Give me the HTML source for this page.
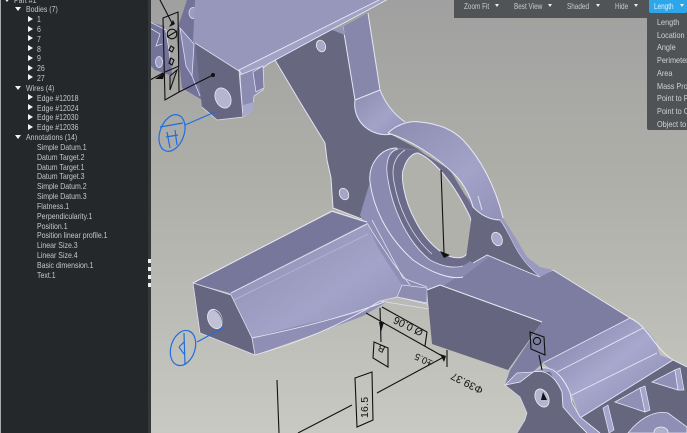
<!DOCTYPE html>
<html><head><meta charset="utf-8"><style>
html,body{margin:0;padding:0;width:687px;height:433px;overflow:hidden;background:#aaa}
#root{position:relative;width:687px;height:433px;overflow:hidden;font-family:"Liberation Sans",sans-serif}
svg{position:absolute;left:0;top:0;filter:blur(.35px)}
#side{position:absolute;left:1px;top:0;width:147px;height:433px;background:#24282b}
#strip{position:absolute;left:148px;top:0;width:3px;height:433px;background:#33383b}
.r{position:absolute;font-size:8.3px;line-height:10px;height:10px;color:#c4c8ca;white-space:nowrap;transform:scaleX(.84);transform-origin:0 0;filter:blur(.25px)}
.o{position:absolute;width:0;height:0;border-left:3.5px solid transparent;border-right:3.5px solid transparent;border-top:4.5px solid #f2f2f2}
.c{position:absolute;width:0;height:0;border-top:3.5px solid transparent;border-bottom:3.5px solid transparent;border-left:5px solid #f2f2f2}
#bar{position:absolute;left:454px;top:0;width:233px;height:18px;background:#505457}
.b{position:absolute;top:1px;font-size:8.2px;line-height:11px;color:#c8cacc;white-space:nowrap;transform:scaleX(.78);transform-origin:0 0;filter:blur(.25px)}
.t{position:absolute;top:4px;width:0;height:0;border-left:2.5px solid transparent;border-right:2.5px solid transparent;border-top:3.5px solid #eee}
#blue{position:absolute;left:649px;top:0;width:38px;height:13px;background:#2ea6ea;border-radius:0 0 2px 2px}
#menu{position:absolute;left:647px;top:15px;width:40px;height:115px;background:#505356;border-radius:0 0 0 2px;overflow:hidden}
.m{position:absolute;left:10px;font-size:8.4px;line-height:10px;color:#d0d2d3;white-space:nowrap;transform:scaleX(.87);transform-origin:0 0;filter:blur(.25px)}
.d{position:absolute;left:148px;width:3px;height:4px;background:#eee}
</style></head><body><div id="root">
<svg width="687" height="433" viewBox="0 0 687 433">
<defs>
<linearGradient id="bg" x1="0" y1="0" x2="0" y2="1"><stop offset="0" stop-color="#a0a0a0"/><stop offset=".45" stop-color="#b0b0aa"/><stop offset="1" stop-color="#c9c9c4"/></linearGradient>
<linearGradient id="lf" x1="0" y1="0" x2="1" y2="1"><stop offset="0" stop-color="#8c8cb0"/><stop offset=".6" stop-color="#a3a3c9"/><stop offset="1" stop-color="#9191b8"/></linearGradient>
<linearGradient id="st" x1="0" y1="0" x2="1" y2="1"><stop offset="0" stop-color="#7e7ea3"/><stop offset=".5" stop-color="#a8a8cf"/><stop offset="1" stop-color="#8686ac"/></linearGradient>
</defs>
<rect x="150" width="537" height="433" fill="url(#bg)"/>

<!-- top-left fragment -->
<g stroke="#dcdcf2" stroke-width=".8">
<polygon points="187,0 203,0 195,43 202,100 182,88 176,32 181,18" fill="#73739a" stroke="none"/>
<polygon points="150,22 164,26 171,60 172,76 155,70 150,65" fill="#73739a" stroke="none"/>
<polygon points="180,28 194,44 192,76 186,66" fill="#8d8db3"/>
<ellipse cx="193" cy="13" rx="4" ry="5.5" fill="#9c9cc0"/>
<polyline points="150,22 166,30 170,58" fill="none"/>
<polyline points="150,28 160,34 156,46 162,44" fill="none"/>
<polyline points="192,76 200,96" fill="none"/>
<ellipse cx="159" cy="62" rx="3.5" ry="5.5" fill="#a0a0c4"/>
</g>

<!-- arm web -->
<path d="M275,60 L332,30 L343,27 L368,13 L380,90 C386,105 395,115 405,122 L388,133 L420,150 L480,210 L500,220 L513,242 L540,277 L487,255 L460,280 L420,270 L367,222 L333,208 L331,178 L327,160 L325,143 Z" fill="#67677f"/>
<polyline points="275,60 300,102 325,143 327,160 331,178 333,208 367,221" fill="none" stroke="#e2e2f2" stroke-width="1"/>
<!-- fillet -->
<path d="M343,27 L368,13 L380,90 L355,100 Z" fill="#8787ab"/>
<path d="M355,100 L380,90 C386,105 395,115 405,122 L388,134 C372,136 352,125 355,100 Z" fill="url(#lf)"/>
<path d="M343,27 L355,100 M368,13 L380,90 C386,105 395,115 405,122 M355,100 L380,90 M355,100 C352,122 372,138 392,134" fill="none" stroke="#e6e6f6" stroke-width="1"/>
<polygon points="332,30 343,27 345,35" fill="#9595b8"/>
<ellipse cx="321" cy="46" rx="4.5" ry="6" transform="rotate(-20 321 46)" fill="#a8a8c8" stroke="#eee" stroke-width=".8"/>

<!-- top plate -->
<polygon points="195,0 385,0 239,70 193,42" fill="#9797bb"/>
<polygon points="239,70 385,-3 392,-3 268,64 263,68 243,77" fill="#a2a2c6" stroke="#eeeefa" stroke-width=".8"/>
<polygon points="240,75 263,66 263,90 254,96 253,110 243,117" fill="#8c8cb2" stroke="#e6e6f6" stroke-width=".7"/>
<polygon points="253,72 263,66 264,88 256,92" fill="#7f7fa6" stroke="#e6e6f6" stroke-width=".7"/>
<!-- end face -->
<polygon points="195,43 239,71 243,117 217,120 202,107" fill="#666680"/>
<polyline points="195,43 239,71 243,117 217,120 202,107" fill="none" stroke="#dedef0" stroke-width=".8"/>
<ellipse cx="223" cy="98" rx="7.5" ry="10.5" transform="rotate(-25 223 98)" fill="#b5b5d2" stroke="#e8e8f6" stroke-width=".8"/>
<polygon points="243,105 254,102 254,110 243,117" fill="#a8a8cc"/>

<!-- right plane -->
<polygon points="440,285 473,263 487,255 540,277 553,270 630,318 543,363 533,372 517,373 505,385 510,370 542,322" fill="#7d7da2"/>
<polyline points="540,275 553,270 630,318" fill="none" stroke="#e6e6f6" stroke-width="1"/>

<!-- fill between arm, ring and plane -->
<polygon points="360,215 370,182 413,255 463,272 480,262 440,288 427,292 402,287 378,250" fill="#8f8fb5"/>
<path d="M367,223 L373,233 L393,263 L410,285 M372,220 L403,278 L427,287" fill="none" stroke="#dcdcf0" stroke-width=".8"/>

<!-- left arm -->
<polygon points="193,283 332,212 367,223 230,293" fill="#77779c"/>
<polyline points="193,283 332,211 367,222" fill="none" stroke="#e8e8f6" stroke-width="1"/>
<path d="M230,293 L367,223 L378,248 L402,285 L397,297 L363,312 L300,325 L252,338 Z" fill="url(#lf)"/>
<polyline points="231,293 367,224" fill="none" stroke="#dcdcf0" stroke-width="1"/>
<polyline points="232,301 368,234" fill="none" stroke="#b8b8d6" stroke-width=".7"/>
<path d="M252,338 L300,325 L363,312 L397,297 L390,300 L363,316 L317,333 L255,355 Z" fill="#8f8fb6"/>
<path d="M252,338 C300,328 350,316 397,297 M255,355 C300,342 340,326 380,301" fill="none" stroke="#e8e8f6" stroke-width=".9"/>
<path d="M397,297 L427,303 L427,288 L402,285 Z" fill="#8d8db2" stroke="#e0e0f0" stroke-width=".7"/>
<path d="M380,301 L397,297 L427,304 L429,309 Z" fill="#b9b9b6" stroke="#e0e0f0" stroke-width=".7"/>
<polygon points="193,283 231,295 252,338 255,355 200,333" fill="#666680" stroke="#dedef0" stroke-width=".8"/>
<ellipse cx="215" cy="319" rx="7" ry="10" transform="rotate(-22 215 319)" fill="#c0c0d6" stroke="#eaeaf6" stroke-width=".8"/>
<path d="M213,310 a7,10 -22 0 1 9,16 a9,12 -22 0 0 -9,-16" fill="#6c6c86"/>

<!-- ring -->
<path d="M397,148 C380,148 368,165 370,182 C373,205 385,235 413,260 C430,272 450,280 463,277 L490,256 L480,210 L420,150 Z" fill="#8a8ab0"/>
<path d="M397,148 C380,148 368,165 370,182 C373,205 385,235 413,260 C430,272 450,280 463,277" fill="none" stroke="#e8e8f6" stroke-width="1"/>
<path d="M398,149 C385,152 386,170 388,180 C392,205 405,240 430,260 C445,268 455,268 463,266 L475,258 L480,220 L450,170 L418,150 Z" fill="#6c6c8a"/>
<path d="M398,149 C385,152 386,170 388,180 C392,205 405,240 430,260 C445,268 455,268 463,266" fill="none" stroke="#dcdcf0" stroke-width=".9"/>
<path d="M405,150 C392,158 392,172 394,182 C398,205 410,235 432,254" fill="none" stroke="#dcdcf0" stroke-width=".8"/>
<path d="M418,153 C435,160 455,185 470,217 C476,235 472,252 463,257 C445,262 425,240 415,220 C404,200 400,175 404,168 C406,160 412,153 418,153 Z" fill="#b1b1ac" stroke="#e4e4f4" stroke-width="1"/>
<!-- ring outer top band -->
<path d="M388,133 C395,126 408,120 420,122 C440,124 453,130 463,140 C480,158 495,185 503,218 L500,220 C490,220 480,215 473,207 C470,195 463,183 455,175 C435,155 410,140 388,133 Z" fill="url(#lf)"/>
<path d="M388,133 C395,126 408,120 420,122 C440,124 453,130 463,140 C480,158 495,185 503,218 M388,133 C410,140 435,155 455,175 C463,183 470,195 473,207 C480,215 490,220 500,220" fill="none" stroke="#e8e8f6" stroke-width="1"/>
<path d="M478,196 L482,210" stroke="#dcdcf0" fill="none"/>
<!-- lug -->
<path d="M473,207 C480,215 490,220 500,220 L513,242 L525,262 L540,277 L530,273 L487,255 L473,263 L466,258 Z" fill="#67677f"/>
<path d="M473,207 C480,215 490,220 500,220 C508,228 514,250 528,265 L540,277 L530,273 L487,255 L473,263" fill="none" stroke="#e4e4f4" stroke-width=".9"/>
<path d="M503,218 L517,240 L527,257 L540,267 L553,270 L540,277 L528,265 C514,250 508,228 500,220 Z" fill="#9a9ac0"/>
<ellipse cx="497" cy="239" rx="5" ry="7" transform="rotate(-25 497 239)" fill="#abaacc" stroke="#eee" stroke-width=".8"/>
<ellipse cx="344" cy="194" rx="4.5" ry="6" transform="rotate(-25 344 194)" fill="#a5a5c6" stroke="#eee" stroke-width=".8"/>

<!-- dark panel -->
<path d="M427,290 L440,285 L542,322 L508,370 L432,344 Z" fill="#65657f"/>
<path d="M427,290 L440,285 L542,322" fill="none" stroke="#eeeef8" stroke-width="1"/>

<!-- right stripes -->
<path d="M543,363 L630,318 L647,330 L655,340 L660,355 L673,360 L580,418 L572,395 L562,378 Z" fill="url(#st)"/>
<path d="M543,363 L630,318 M557,372 L643,328 M572,395 L657,353 M580,418 L673,360" fill="none" stroke="#e4e4f6" stroke-width=".9"/>
<path d="M630,318 C648,326 654,348 673,360 L687,367" fill="none" stroke="#eaeaf8" stroke-width="1"/>
<!-- dark underside + ribs -->
<polygon points="572,400 580,418 673,360 687,367 687,433 575,433" fill="#66667f"/>
<polyline points="580,418 673,360 687,367" fill="none" stroke="#e4e4f6" stroke-width=".9"/>
<polygon points="615,402 640,388 645,412" fill="#9090b6" stroke="#e6e6f6" stroke-width=".8"/>
<polygon points="652,382 675,370 678,390" fill="#9090b6" stroke="#e6e6f6" stroke-width=".8"/>
<polygon points="603,408 608,405 614,430 609,433" fill="#a5a5cc" stroke="#e6e6f6" stroke-width=".7"/>
<polygon points="640,388 645,386 650,410 645,412" fill="#a5a5cc" stroke="#e6e6f6" stroke-width=".7"/>
<polygon points="675,370 680,368 684,390 678,390" fill="#a5a5cc" stroke="#e6e6f6" stroke-width=".7"/>
<path d="M628,433 C640,418 655,410 668,413 L687,427 L687,433 Z" fill="#8f8fb6" stroke="#e6e6f6" stroke-width=".8"/>
<ellipse cx="661" cy="432" rx="7" ry="5" fill="#b0b0cf" stroke="#eee" stroke-width=".8"/>
<!-- lug right -->
<path d="M505,385 L520,382 L533,372 L542,368 L555,368 L570,393 L572,403 L580,417 L600,433 L517,433 L525,420 L527,413 L520,397 Z" fill="#9c9cc4"/>
<path d="M505,385 L520,382 L533,372 L550,372 L562,392 L563,407 L577,423 L587,433 L517,433 L525,420 L527,413 L520,397 Z" fill="#66667f"/>
<path d="M505,385 L520,382 L533,372 C545,369 555,376 562,392 L563,407 L577,423 L587,433 M542,368 C555,366 565,380 570,393 L572,403 L580,417 L600,433" fill="none" stroke="#e6e6f6" stroke-width=".9"/>
<path d="M505,385 L520,397 L527,413 L525,420 L517,433" fill="none" stroke="#d8d8ec" stroke-width=".7"/>
<polygon points="505,385 517,373 533,372 520,382" fill="#9a9abf" stroke="#e6e6f6" stroke-width=".7"/>
<ellipse cx="542" cy="398" rx="6.5" ry="9.5" transform="rotate(-25 542 398)" fill="#b5b5d2" stroke="#eee" stroke-width=".8"/>

<!-- black annotations -->
<g fill="none" stroke="#111" stroke-width="1.1">
<path d="M160,0 L173,25"/>
<polygon points="163,18 178,12 179,92 165,100"/>
<path d="M165,72 L179,66"/>
<circle cx="172" cy="34" r="4.8"/>
<path d="M167,37 L177,31"/>
<path d="M171,46 l3,2 -2,4 -3,-2z M171,58 l3,2 -2,5 -3,-2z"/>
<path d="M150,80 L163,73 M179,92 L213,75"/>
<path d="M170,90 L177,70 L170,76 Z" fill="#9a9a9a"/>
<path d="M366,313 L444,357 M382,307 L427,332 L425,346 M380,308 L381,342"/>
<polygon points="374,342 388,348 388,367 373,358"/>
<polygon points="355,378 372,372 373,420 357,427"/>
<path d="M298,433 L352,405 M377,393 L442,358 M277,380 L279,433 M447,350 L447,367 M441,170 L444,253"/>
<polygon points="530,332 544,337 545,355 531,349"/>
<circle cx="537" cy="341" r="3.6"/>
<path d="M539,355 L542,370"/>
</g>
<g fill="#111">
<polygon points="379,322 384,322 381,332"/>
<polygon points="440,354 446,356 444,362"/>
<polygon points="440,251 450,255 444,258"/>
<circle cx="213" cy="75" r="2"/>
<polygon points="169,27 173,20 175,24"/>
<polygon points="155,79 165,72 163,79"/>
<polygon points="543,392 547,400 541,400"/>
</g>
<g font-family="Liberation Sans,sans-serif" fill="#111">
<text transform="translate(424,330) rotate(206)" font-size="10.5">Ø 0.06</text>
<text transform="translate(386,347) rotate(206)" font-size="10">B</text>
<text transform="translate(433,361) rotate(206)" font-size="9.5">±0.5</text>
<text transform="translate(484,388) rotate(207)" font-size="10.5">Φ39.37</text>
<text transform="translate(368,418) rotate(-90)" font-size="10.5" style="letter-spacing:.2px">16.5</text>
</g>
<!-- blue callouts -->
<g fill="none" stroke="#1f6ee0" stroke-width="1.2">
<ellipse cx="172" cy="133" rx="12" ry="19" transform="rotate(20 172 133)"/>
<path d="M185,125 L215,112"/>
<path d="M160,127 L183,123 M167,132 L170,148 M175,130 L177,145 M166,137 L178,135"/>
<ellipse cx="183" cy="348" rx="12" ry="18" transform="rotate(18 183 348)"/>
<path d="M197,342 L223,328 M184,333 L185,365 M179,347 L184,342 M179,347 L184,354"/>
</g>
</svg>

<div id="side"></div><div id="strip"></div>
<div class="d" style="top:259px"></div><div class="d" style="top:267px"></div><div class="d" style="top:275px"></div><div class="d" style="top:283px"></div>

<div class="o" style="left:4px;top:-2px"></div><div class="r" style="left:14px;top:-5px">Part #1</div>
<div class="o" style="left:15px;top:7px"></div><div class="r" style="left:26px;top:4px">Bodies (7)</div>
<div class="c" style="left:28px;top:16px"></div><div class="r" style="left:37px;top:14px">1</div>
<div class="c" style="left:28px;top:26px"></div><div class="r" style="left:37px;top:24px">6</div>
<div class="c" style="left:28px;top:35px"></div><div class="r" style="left:37px;top:34px">7</div>
<div class="c" style="left:28px;top:45px"></div><div class="r" style="left:37px;top:44px">8</div>
<div class="c" style="left:28px;top:55px"></div><div class="r" style="left:37px;top:53px">9</div>
<div class="c" style="left:28px;top:65px"></div><div class="r" style="left:37px;top:63px">26</div>
<div class="c" style="left:28px;top:74px"></div><div class="r" style="left:37px;top:73px">27</div>
<div class="o" style="left:15px;top:86px"></div><div class="r" style="left:26px;top:83px">Wires (4)</div>
<div class="c" style="left:28px;top:94px"></div><div class="r" style="left:37px;top:93px">Edge #12018</div>
<div class="c" style="left:28px;top:104px"></div><div class="r" style="left:37px;top:103px">Edge #12024</div>
<div class="c" style="left:28px;top:114px"></div><div class="r" style="left:37px;top:112px">Edge #12030</div>
<div class="c" style="left:28px;top:124px"></div><div class="r" style="left:37px;top:122px">Edge #12036</div>
<div class="o" style="left:15px;top:135px"></div><div class="r" style="left:26px;top:132px">Annotations (14)</div>
<div class="r" style="left:37px;top:142px">Simple Datum.1</div>
<div class="r" style="left:37px;top:152px">Datum Target.2</div>
<div class="r" style="left:37px;top:162px">Datum Target.1</div>
<div class="r" style="left:37px;top:171px">Datum Target.3</div>
<div class="r" style="left:37px;top:181px">Simple Datum.2</div>
<div class="r" style="left:37px;top:191px">Simple Datum.3</div>
<div class="r" style="left:37px;top:201px">Flatness.1</div>
<div class="r" style="left:37px;top:211px">Perpendicularity.1</div>
<div class="r" style="left:37px;top:221px">Position.1</div>
<div class="r" style="left:37px;top:230px">Position linear profile.1</div>
<div class="r" style="left:37px;top:240px">Linear Size.3</div>
<div class="r" style="left:37px;top:250px">Linear Size.4</div>
<div class="r" style="left:37px;top:260px">Basic dimension.1</div>
<div class="r" style="left:37px;top:270px">Text.1</div>

<div id="bar"></div>
<div class="b" style="left:464px">Zoom Fit</div><div class="t" style="left:495px"></div>
<div class="b" style="left:514px">Best View</div><div class="t" style="left:548px"></div>
<div class="b" style="left:567px">Shaded</div><div class="t" style="left:596px"></div>
<div class="b" style="left:615px">Hide</div><div class="t" style="left:634px"></div>
<div id="blue"></div>
<div class="b" style="left:654px;color:#e4f3fc">Length</div><div class="t" style="left:680px"></div>
<div id="menu">
<div class="m" style="top:2px">Length</div>
<div class="m" style="top:15px">Location</div>
<div class="m" style="top:27px">Angle</div>
<div class="m" style="top:40px">Perimeter</div>
<div class="m" style="top:53px">Area</div>
<div class="m" style="top:66px">Mass Properties</div>
<div class="m" style="top:78px">Point to Point</div>
<div class="m" style="top:91px">Point to Object</div>
<div class="m" style="top:104px">Object to Object</div>
</div>
</div></body></html>
